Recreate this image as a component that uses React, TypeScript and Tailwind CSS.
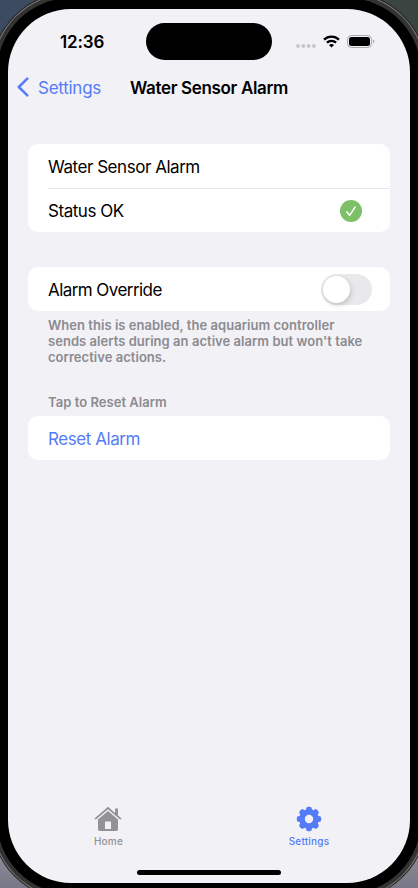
import type { ReactNode } from "react";

function StatusBar() {
  return (
    <div className="flex h-[66px] shrink-0 items-start">
      <div className="ml-[52px] mt-[22px] w-[86px] text-[17px] font-semibold leading-[22px] tracking-[-0.15px]">12:36</div>
      <div className="mt-[14px] h-[37px] w-[126px] rounded-full bg-black" />
      <div className="ml-6 mt-[26px] flex items-center">
        <svg width="20" height="13" viewBox="0 0 20 13" fill="#c6c6ca">
          <circle cx="2" cy="11" r="1.9" />
          <circle cx="7.3" cy="11" r="1.9" />
          <circle cx="12.6" cy="11" r="1.9" />
          <circle cx="17.9" cy="11" r="1.9" />
        </svg>
        <svg className="ml-[7px]" width="17" height="13" viewBox="0 0 17 13" fill="none" stroke="#000" strokeWidth="2.3">
          <path d="M1 4.7a10.8 10.8 0 0 1 15 0" />
          <path d="M3.9 7.7a6.7 6.7 0 0 1 9.2 0" />
          <path d="M8.5 12.5 6 10.1a3.6 3.6 0 0 1 5 0Z" fill="#000" stroke="none" />
        </svg>
        <svg className="ml-[7px]" width="28" height="13" viewBox="0 0 28 13">
          <rect x="0.5" y="0.5" width="24" height="12" rx="3.8" fill="none" stroke="#aaaaad" />
          <rect x="2" y="2" width="21" height="9" rx="2.5" fill="#000" />
          <path d="M26 4.5c1.8.7 1.8 3.3 0 4Z" fill="#aaaaad" />
        </svg>
      </div>
    </div>
  );
}

function NavBar() {
  return (
    <div className="flex h-[24px] shrink-0 items-center text-[17px] leading-6">
      <svg className="ml-[9px]" width="12" height="20" viewBox="0 0 12 20" fill="none" stroke="#557bf6" strokeWidth="2.5" strokeLinecap="round" strokeLinejoin="round">
        <path d="M10.3 1.7 1.8 10l8.5 8.3" />
      </svg>
      <span className="ml-[9px] w-[92px] pt-[2px] tracking-[-0.26px] text-[#557bf6]">Settings</span>
      <h1 className="whitespace-nowrap pt-[2px] font-semibold tracking-[-0.34px]">Water Sensor Alarm</h1>
    </div>
  );
}

function Card({ children }: { children: ReactNode }) {
  return <section className="mx-5 shrink-0 overflow-hidden rounded-[10px] bg-white text-[17px] tracking-[-0.46px]">{children}</section>;
}

export default function App() {
  return (
    <div className="h-[888px] w-[418px] overflow-hidden bg-[linear-gradient(180deg,transparent_0%,transparent_10%,#555b65_50%,#8d8d9b_96%,#777785_100%),linear-gradient(90deg,#3d4b61_0%,#3d4b61_50%,#3a4540_100%)] px-2 pt-[9px] font-[Inter,sans-serif] text-black">
      <main className="flex h-[874px] w-[402px] flex-col rounded-[63px] bg-[#f2f1f6] shadow-[0_0_0_11px_#000,0_0_0_15px_#333333,0_0_0_16px_#777777,0_0_0_17px_#222222]">
        <StatusBar />
        <NavBar />
        <div className="mt-[45px]" />
        <Card>
          <div className="flex h-11 items-center pl-5 pt-[4px]">Water Sensor Alarm</div>
          <div className="ml-5 flex h-11 items-center justify-between border-t border-[#e6e6e8] pr-7">
            <span className="pt-[3px]">Status OK</span>
            <svg width="22" height="22" viewBox="0 0 22 22">
              <circle cx="11" cy="11" r="11" fill="#7dc067" />
              <path d="m6.7 11.8 2.9 3.5 5.5-8.2" fill="none" stroke="#fff" strokeWidth="1.5" strokeLinecap="round" strokeLinejoin="round" />
            </svg>
          </div>
        </Card>
        <div className="mt-[35px]" />
        <Card>
          <div className="flex h-11 items-center justify-between pl-5 pr-[18px]">
            <span className="pt-[4px] tracking-[-0.56px]">Alarm Override</span>
            <div className="flex h-[31px] w-[51px] items-center rounded-full bg-[#e9e9eb] p-[2px]">
              <div className="size-[27px] rounded-full bg-white shadow-[1px_2px_5px_rgba(0,0,0,0.18)]" />
            </div>
          </div>
        </Card>
        <p className="ml-10 mt-[6px] whitespace-nowrap text-[13px] font-semibold leading-4 tracking-[0.04px] text-[#8b8b90]">
          <span className="block">When this is enabled, the aquarium controller</span>
          <span className="block">sends alerts during an active alarm but won't take</span>
          <span className="block">corrective actions.</span>
        </p>
        <h2 className="mb-[6px] ml-10 mt-[29px] text-[13px] font-semibold leading-4 tracking-[0.04px] text-[#8b8b90]">Tap to Reset Alarm</h2>
        <Card>
          <button className="flex h-11 w-full items-center pl-5 pt-[3px] tracking-[-0.43px] text-[#557bf6]">Reset Alarm</button>
        </Card>
        <nav className="mt-auto grid grid-cols-2 text-[10px] font-medium leading-3 tracking-[0.2px]">
          <div className="flex flex-col items-center text-[#929297]">
            <svg className="mr-px" width="28" height="26" viewBox="0 0 28 26" fill="currentColor">
              <path d="M14 .7 21 6.9V2.5h3v7l3.5 3-1.2 1.3L14 3.2 1.7 13.8.5 12.5Z" />
              <path fillRule="evenodd" d="M14 5 24 13.5V23q0 2-2 2H6q-2 0-2-2v-9.5ZM11 15.5v7.5h6v-7.5Z" />
            </svg>
            <span className="mt-[3px]">Home</span>
          </div>
          <div className="flex flex-col items-center pr-px text-[#557bf6]">
            <svg width="26" height="26" viewBox="0 0 26 26">
              <g fill="currentColor">
                <circle cx="13" cy="13" r="9.9" />
                {[0, 45, 90, 135].map((angle) => (
                  <rect key={angle} x="10.1" y="0.8" width="5.8" height="24.4" rx="2.2" transform={`rotate(${angle} 13 13)`} />
                ))}
              </g>
              <circle cx="13" cy="13" r="4.2" fill="#f2f1f6" />
            </svg>
            <span className="mt-[3px]">Settings</span>
          </div>
        </nav>
        <div className="mx-auto mb-2 mt-[23px] h-[5px] w-36 shrink-0 rounded-full bg-black" />
      </main>
    </div>
  );
}
